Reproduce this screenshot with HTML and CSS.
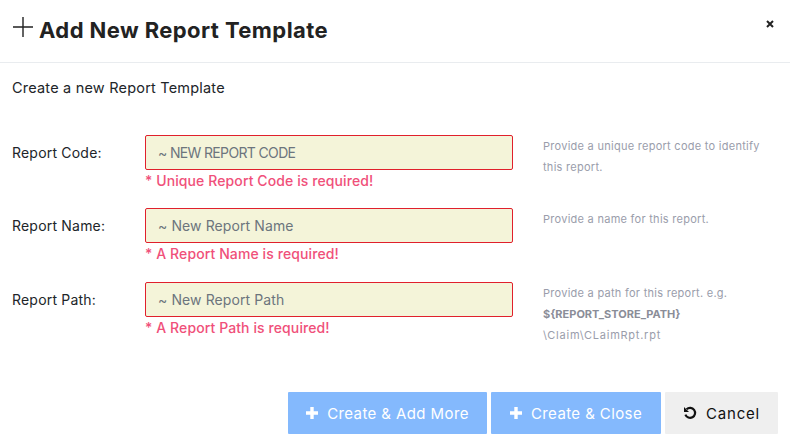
FILE: index.html
```html
<!DOCTYPE html>
<html lang="en">
<head>
<meta charset="utf-8">
<title>Add New Report Template</title>
<link rel="stylesheet" href="styles.css">
</head>
<body>
<div class="modal">
  <header class="head">
    <h1 class="title">
      <svg class="title-icon" viewBox="0 0 20 20" width="20" height="20"><path d="M10 0v20M0 10h20" stroke="#222" stroke-width="1.4" fill="none"/></svg>
      Add New Report Template
    </h1>
    <svg class="close" viewBox="0 0 8 8" width="8" height="8"><path d="M1 1l6 6M7 1L1 7" stroke="#222" stroke-width="2" fill="none"/></svg>
  </header>
  <main class="body">
    <p class="intro">Create a new Report Template</p>
    <form class="form">
      <div class="row">
        <label class="label">Report Code:</label>
        <div class="field">
          <input class="input caps" placeholder="~ NEW REPORT CODE">
          <div class="err">* Unique Report Code is required!</div>
        </div>
        <div class="help">Provide a unique report code to identify this report.</div>
      </div>
      <div class="row">
        <label class="label">Report Name:</label>
        <div class="field">
          <input class="input" placeholder="~ New Report Name">
          <div class="err">* A Report Name is required!</div>
        </div>
        <div class="help">Provide a name for this report.</div>
      </div>
      <div class="row">
        <label class="label">Report Path:</label>
        <div class="field">
          <input class="input" placeholder="~ New Report Path">
          <div class="err">* A Report Path is required!</div>
        </div>
        <div class="help">Provide a path for this report. e.g.<br><b>${REPORT_STORE_PATH}</b><br><span class="path">\Claim\CLaimRpt.rpt</span></div>
      </div>
    </form>
  </main>
  <footer class="foot">
    <button class="btn primary wide" type="button"><svg class="ico" viewBox="0 0 12 12" width="12" height="12"><path d="M6 0v12M0 6h12" stroke="#fff" stroke-width="3.4" fill="none"/></svg>Create &amp; Add More</button>
    <button class="btn primary mid" type="button"><svg class="ico" viewBox="0 0 12 12" width="12" height="12"><path d="M6 0v12M0 6h12" stroke="#fff" stroke-width="3.4" fill="none"/></svg>Create &amp; Close</button>
    <button class="btn plain" type="button"><svg class="ico" viewBox="0 0 14 14" width="14" height="14"><path d="M3.6 3.2A5 5 0 1 1 2.4 8.6" stroke="#111" stroke-width="2.2" fill="none"/><path d="M1 1v5h5z" fill="#111"/></svg>Cancel</button>
  </footer>
</div>
</body>
</html>
```
FILE: styles.css
```css
* { box-sizing: border-box; }
html, body { margin: 0; padding: 0; }
body { width: 790px; height: 448px; background: #fff; font-family: Inter, "Liberation Sans", sans-serif; color: #212529; overflow: hidden; }
.modal { display: flex; flex-direction: column; height: 448px; }
.head { height: 63px; border-bottom: 1px solid #e9ecef; display: flex; justify-content: space-between; align-items: flex-start; padding: 18px 16px 0 13px; }
.title { margin: 0; display: flex; align-items: center; gap: 6px; font-size: 22px; line-height: 24px; font-weight: 700; letter-spacing: 0.42px; color: #222; }
.title-icon { margin-top: -6px; }
.close { margin-top: 2px; }
.body { padding: 0 12px; flex: 1; }
.intro { margin: 16px 0 0; font-size: 14.5px; line-height: 18px; letter-spacing: 0.2px; color: #212529; }
.form { margin-top: 38px; display: flex; flex-direction: column; gap: 17.4px; }
.row { display: grid; grid-template-columns: 133px 368px 1fr; height: 56px; }
.label { font-size: 14px; line-height: 35px; letter-spacing: 0.2px; color: #212529; }
.input { display: block; width: 368px; height: 35px; background: #f4f4d9; border: 1px solid #e0202c; border-radius: 2px; padding: 0 12px; font: 14px Inter, "Liberation Sans", sans-serif; letter-spacing: 0.1px; outline: none; }
.caps { letter-spacing: -0.65px; }
.input::placeholder { color: #6c757d; opacity: 1; }
.err { font-size: 14px; line-height: 20px; margin-top: 1px; font-weight: 500; letter-spacing: 0.1px; color: #f0507a; white-space: nowrap; }
.help { padding: 1px 0 0 30px; font-size: 11px; line-height: 21px; letter-spacing: 0.27px; color: #9a9dab; }
.help b { color: #8a8d98; font-weight: 700; letter-spacing: 0; }
.path { letter-spacing: 0.75px; }
.foot { display: flex; justify-content: flex-end; gap: 4px; padding: 0 12px 14px; }
.btn { height: 42px; border: 0; border-radius: 1px; font: 15px Inter, "Liberation Sans", sans-serif; letter-spacing: 0.4px; display: flex; align-items: center; justify-content: center; gap: 9px; padding: 0; }
.primary { background: #84b9fd; color: #fff; }
.wide { width: 199px; }
.mid { width: 170px; }
.plain { width: 113px; background: #efefef; color: #111; letter-spacing: 0.8px; }
```
